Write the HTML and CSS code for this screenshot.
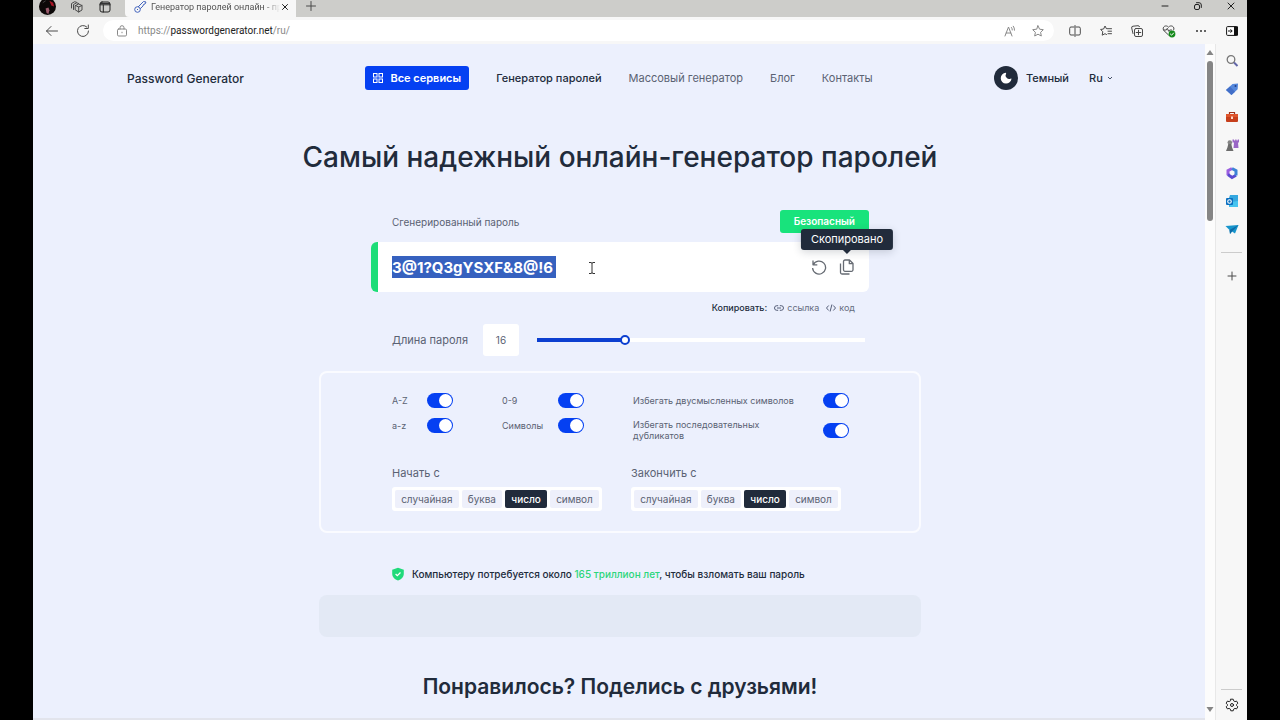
FILE: index.html
```html
<!DOCTYPE html>
<html lang="ru">
<head>
<meta charset="utf-8">
<title>Генератор паролей онлайн</title>
<link rel="stylesheet" href="styles.css">
</head>
<body>
<div class="window">
  <div class="tabs">
    <div class="tabs-left">
      <svg class="avatar" viewBox="0 0 18 18"><circle cx="9" cy="9" r="9" fill="#0c0808"/><path d="M11 3l4 2 1 4-3-1z" fill="#a81626"/><path d="M7 11l3-1 1 3-1 4-2-1z" fill="#9a5a6c"/><path d="M4 5l3-2" stroke="#444" fill="none"/></svg>
      <svg class="i14 line" viewBox="0 0 14 14"><path d="M5.500 5.500l3.200-1.500 3.300 1.500v4.500l-3.300 2-3.200-2zM5.500 5.500l3.200 1.500L12 5.500M8.700 7v5M3.500 9.500V4.500l3.200-1.700 2 .7M1.500 8V3.500L4.700 1.700l1.800.6"/></svg>
      <svg class="i14 line dark" viewBox="0 0 14 14"><rect x="2" y="2" width="10" height="10" rx="2"/><path d="M2 4.800h10M5.300 5v7M2.500 3.400h9"/></svg>
    </div>
    <div class="tab">
      <svg class="i14 key" viewBox="0 0 14 14"><circle cx="4.500" cy="9.500" r="2.800"/><path d="M5 7l5.500-5.500L13 2l-1 2-1.500.5L10 6 7.200 8.800M4 10l1-1"/></svg>
      <span class="tab-title">Генератор паролей онлайн - пр</span>
      <button class="bare" aria-label="Закрыть вкладку"><svg class="i10 line dark" viewBox="0 0 10 10"><path d="M2.500 2.500l5 5M7.500 2.500l-5 5"/></svg></button>
    </div>
    <button class="bare new-tab" aria-label="Новая вкладка"><svg class="i12 line" viewBox="0 0 12 12"><path d="M6 1.500v9M1.500 6h9"/></svg></button>
    <div class="win-buttons">
      <button class="bare" aria-label="Свернуть"><svg class="i12 line dark" viewBox="0 0 12 12"><path d="M3 6h6"/></svg></button>
      <button class="bare" aria-label="Восстановить"><svg class="i12 line dark" viewBox="0 0 12 12"><rect x="2.500" y="4.500" width="5" height="5" rx="1.500"/><path d="M4.500 2.700h2.500a2.300 2.300 0 0 1 2.300 2.300V7.500"/></svg></button>
      <button class="bare" aria-label="Закрыть"><svg class="i12 line dark" viewBox="0 0 12 12"><path d="M3 3l6 6M9 3l-6 6"/></svg></button>
    </div>
  </div>
  <div class="toolbar">
    <button class="bare" aria-label="Назад"><svg class="i14 line" viewBox="0 0 14 14"><path d="M12.500 7h-11M6 2.500L1.500 7 6 11.500"/></svg></button>
    <button class="bare" aria-label="Обновить"><svg class="i14 line" viewBox="0 0 14 14"><path d="M12.500 7a5.500 5.500 0 1 1-1.700-4M12.300 1v3.500H8.800"/></svg></button>
    <div class="address">
      <svg class="i12 line faint" viewBox="0 0 12 12"><rect x="1.500" y="4" width="9" height="7" rx="1.200"/><path d="M4 4V2.700a2 2 0 0 1 4 0V4M6 7.200v.6"/></svg>
      <a class="url" href="#">https://<b>passwordgenerator.net</b>/ru/</a>
      <svg class="i12 line faint" viewBox="0 0 12 12"><path d="M1 11L4.500 2 8 11M2.200 8h4.600M7.500 2.500a4 4 0 0 1 .8 2.500M9.300 1.200a6 6 0 0 1 1.200 4"/></svg>
      <svg class="i12 line faint" viewBox="0 0 12 12"><path d="M6 .8l1.600 3.400 3.700.5-2.700 2.600.7 3.700L6 9.200 2.700 11l.7-3.700L.7 4.700l3.700-.5z"/></svg>
    </div>
    <div class="tools">
      <svg class="i12 line" viewBox="0 0 12 12"><path d="M5 2H2a1.300 1.300 0 0 0-1.300 1.300v5.400A1.300 1.300 0 0 0 2 10h3M7 2h3a1.300 1.300 0 0 1 1.300 1.300v5.400A1.300 1.300 0 0 1 10 10H7M6 .5v11"/></svg>
      <svg class="i12 line" viewBox="0 0 12 12"><path d="M7 3.700h4.500M8 6.200h3.500M8 8.700h3.500M6.400 3.600L5 1 3.600 4 .6 4.500 2.800 6.700l-.6 3.500L5 8.700l1.500.8"/></svg>
      <svg class="i12 line" viewBox="0 0 12 12"><rect x="3.500" y="3.500" width="8" height="8" rx="1.500"/><path d="M7.500 5.200v4.600M5.200 7.500h4.600M2 8.500L.7 3A1.500 1.500 0 0 1 2 1.200L7 .7a1.500 1.500 0 0 1 1.500 1"/></svg>
      <svg class="i14 line" viewBox="0 0 14 14"><path d="M6.500 11L1.800 6.500C-.5 3 4 .2 6.500 3.200 9 .2 13.500 3 11.600 6M1.500 6h2.800l1-1.700 1.400 3 1-1.300h1.800"/><circle cx="10" cy="10" r="3.400" fill="#168a1c" stroke="none"/><path d="M8.400 10l1.200 1.200 2-2.200" stroke="#fff"/></svg>
      <svg class="i12" viewBox="0 0 12 12" fill="#333"><circle cx="2" cy="6" r="1"/><circle cx="6" cy="6" r="1"/><circle cx="10" cy="6" r="1"/></svg>
      <svg class="i12" viewBox="0 0 12 12"><rect x=".6" y="1.600" width="10.800" height="8.800" rx="1" fill="#fff" stroke="#111"/><path d="M8 1.500h4v9H8z" fill="#111"/><path d="M2 6h4M4.500 4.300L6.200 6 4.500 7.700" stroke="#111" fill="none"/></svg>
    </div>
  </div>
  <div class="body">
    <div class="page">
      <header class="header">
        <a class="logo" href="#">Password Generator</a>
        <nav class="nav">
          <button class="services"><svg class="i10" viewBox="0 0 10 10" fill="none" stroke="#fff"><rect x=".5" y=".5" width="3.500" height="3.500"/><rect x="6" y=".5" width="3.500" height="3.500"/><rect x=".5" y="6" width="3.500" height="3.500"/><rect x="6" y="6" width="3.500" height="3.500"/></svg>Все сервисы</button>
          <a class="current" href="#">Генератор паролей</a>
          <a href="#">Массовый генератор</a>
          <a href="#">Блог</a>
          <a href="#">Контакты</a>
        </nav>
        <div class="settings">
          <button class="theme"><svg class="i24" viewBox="0 0 24 24"><circle cx="12" cy="12" r="12" fill="#212b3b"/><path d="M11.800 6.800a5.400 5.400 0 1 0 5.700 6 .4.400 0 0 0-.6-.3 3.600 3.600 0 0 1-4.800-5 .5.500 0 0 0-.3-.7z" fill="#fff"/></svg>Темный</button>
          <label class="lang"><select aria-label="Язык"><option>Ru</option></select><svg class="i6" viewBox="0 0 6 6"><path d="M1 2l2 2 2-2" fill="none" stroke="#455066"/></svg></label>
        </div>
      </header>
      <main class="main">
        <h1>Самый надежный онлайн-генератор паролей</h1>
        <section class="generator">
          <div class="label-row"><label for="pw">Сгенерированный пароль</label><span class="badge">Безопасный</span></div>
          <div class="field">
            <input id="pw" class="password" type="text" readonly value="3@1?Q3gYSXF&amp;8@!6">
            <svg class="caret" viewBox="0 0 8 12"><path d="M1 .5h2l1 .7 1-.7h2M4 1v10M1 11.500h2l1-.7 1 .7h2" fill="none" stroke="#333"/></svg>
            <div class="actions">
              <button class="bare" aria-label="Обновить пароль"><svg class="i16 action" viewBox="0 0 16 16"><path d="M2 1.500v4.300h4.300M2.300 5.600A6.500 6.500 0 1 1 1.600 9"/></svg></button>
              <button class="bare copy" aria-label="Скопировать"><svg class="i16 action" viewBox="0 0 16 16"><path d="M10.500 1H6a1.500 1.500 0 0 0-1.500 1.500v8.300A1.500 1.500 0 0 0 6 12.300h6.500a1.500 1.500 0 0 0 1.500-1.500V4.500zM10.300 1v3.700H14M1.500 4.500v9A1.500 1.500 0 0 0 3 15h7.500"/></svg><span class="tooltip" role="tooltip">Скопировано</span></button>
            </div>
          </div>
          <div class="share"><b>Копировать:</b>
            <a href="#"><svg class="i10" viewBox="0 0 10 10"><path d="M4.200 7.300H2.800a2.300 2.300 0 0 1 0-4.600h1.400M5.800 2.700h1.400a2.300 2.300 0 0 1 0 4.600H5.800M3 5h4"/></svg>ссылка</a>
            <a href="#"><svg class="i10" viewBox="0 0 10 10"><path d="M2.700 2.500L.5 5l2.200 2.500M7.300 2.500L9.500 5 7.300 7.500M5.900 1.500l-1.800 7"/></svg>код</a></div>
          <div class="length"><label for="len">Длина пароля</label><input id="len" class="count" type="text" value="16"><input class="range" type="range" min="4" max="50" value="16" aria-label="Длина пароля"></div>
        </section>
        <section class="options">
          <div class="toggles">
            <div class="col"><label>A-Z<input type="checkbox" class="switch" checked></label><label>a-z<input type="checkbox" class="switch" checked></label></div>
            <div class="col col-b"><label>0-9<input type="checkbox" class="switch" checked></label><label>Символы<input type="checkbox" class="switch" checked></label></div>
            <div class="col col-c"><label>Избегать двусмысленных символов<input type="checkbox" class="switch" checked></label><label class="two">Избегать последовательных дубликатов<input type="checkbox" class="switch" checked></label></div>
          </div>
          <div class="ends">
            <fieldset><legend>Начать с</legend><div class="segments">
              <label><input type="radio" name="start">случайная</label><label><input type="radio" name="start">буква</label><label><input type="radio" name="start" checked>число</label><label><input type="radio" name="start">символ</label></div></fieldset>
            <fieldset><legend>Закончить с</legend><div class="segments">
              <label><input type="radio" name="end">случайная</label><label><input type="radio" name="end">буква</label><label><input type="radio" name="end" checked>число</label><label><input type="radio" name="end">символ</label></div></fieldset>
          </div>
        </section>
        <p class="strength"><svg class="i14" viewBox="0 0 14 14"><path d="M7 .7l5.800 2v4c0 3.300-2.500 5.600-5.800 6.800C3.700 12.300 1.200 10 1.200 6.700v-4z" fill="#20da7a"/><path d="M4.600 7l1.700 1.700 3.200-3.200" fill="none" stroke="#fff" stroke-width="1.200"/></svg><span>Компьютеру потребуется около <em>165 триллион лет</em>, чтобы взломать ваш пароль</span></p>
        <div class="banner"></div>
        <h2>Понравилось? Поделись с друзьями!</h2>
      </main>
    </div>
    <div class="scroll">
      <svg class="i8" viewBox="0 0 8 8"><path d="M4 1l3.500 5h-7z" fill="#858585"/></svg>
      <div class="thumb"></div>
      <svg class="i8 down" viewBox="0 0 8 8"><path d="M4 7L.5 2h7z" fill="#858585"/></svg>
    </div>
    <aside class="side">
      <svg class="i14" viewBox="0 0 14 14" fill="none"><circle cx="6" cy="5.500" r="3.800" stroke="#777" stroke-width="1.300"/><path d="M9 8.500l3.500 3.500" stroke="#6267a8" stroke-width="2"/></svg>
      <svg class="i14" viewBox="0 0 14 14"><path d="M1 8l6.500-6L13 1.500l-.3 5.800L6.500 13z" fill="#5588dc"/><path d="M1 8l4-3.500 5 5.200L6.500 13z" fill="#426fc8"/><circle cx="10.500" cy="4" r="1" fill="#243f87"/></svg>
      <svg class="i14" viewBox="0 0 14 14"><path d="M4.500 4V2.500h5V4" fill="none" stroke="#9b321d" stroke-width="1.200"/><rect x="1" y="4" width="12" height="8" rx="1" fill="#c63f1c"/><path d="M1 4h12v3H1z" fill="#df552c"/><path d="M6 6.500h2v2.500H6z" fill="#ffd8c9"/></svg>
      <svg class="i14" viewBox="0 0 14 14"><path d="M7.500 1.500H9v1h1.200v-1h1.300v1h1.200v-1H14v3h-1l.5 5.500h-5L9 4.500H7.500z" fill="#9a66c6"/><circle cx="4.800" cy="4.500" r="2.300" fill="#858585"/><path d="M3.300 6h3l.8 3.500 1.400 3.500H1l1.400-3.500z" fill="#6c6c6c"/></svg>
      <svg class="i14" viewBox="0 0 14 14" fill="none" stroke-width="3"><path d="M7 2.500L3 4.700v4.500" stroke="#9b5ee0"/><path d="M3 8.500l4 3 4-2.300" stroke="#5a4ad0"/><path d="M11 9.500V4.700L7 2.500" stroke="#3c83d6"/><path d="M7 5l2 1v2L7 9 5 8V6z" fill="#f7f7f7" stroke="none"/></svg>
      <svg class="i14" viewBox="0 0 14 14"><path d="M5 1h8v12H4V4z" fill="#35a8e0"/><path d="M6 8l7-1v6H4z" fill="#46c4f0"/><rect x="1" y="4" width="7" height="7" rx="1" fill="#0a6fc0"/><circle cx="4.500" cy="7.500" r="1.800" fill="none" stroke="#fff" stroke-width="1.100"/></svg>
      <svg class="i14" viewBox="0 0 14 14"><path d="M.5 4L13.500 3l-3.500 8.500-3-2-2 2.500-.5-4z" fill="#1795cc"/><path d="M4.500 8l9-5L7 9.500 5 12z" fill="#0e6ba7"/></svg>
      <hr>
      <button class="bare" aria-label="Добавить"><svg class="i14 line" viewBox="0 0 14 14"><path d="M7 3v8M3 7h8"/></svg></button>
      <hr class="low">
      <button class="bare gear" aria-label="Настройки"><svg class="i14 line dark" viewBox="0 0 14 14"><path d="M5.800 1.200h2.400l.5 1.700 1.200.7 1.700-.5 1.200 2.100L11.600 6.500v1.100l1.200 1.200-1.200 2.100-1.700-.5-1.200.7-.5 1.700H5.800l-.5-1.700-1.200-.7-1.700.5-1.200-2.100 1.200-1.200V6.500L1.200 5.200l1.200-2.100 1.700.5 1.200-.7z"/><circle cx="7" cy="7" r="1.500"/></svg></button>
    </aside>
  </div>
</div>
</body>
</html>
```
FILE: styles.css
```css
* { box-sizing: border-box; }
body { margin: 0; padding: 0 33px; background: #000; font-family: Inter, "Noto Sans", sans-serif; color: #212b3b; }
.window { height: 100vh; display: flex; flex-direction: column; overflow: hidden; background: #f7f7f7; }
svg { display: block; flex: none; }
a { color: inherit; text-decoration: none; }
button, input, select { font: inherit; color: inherit; }
.bare { border: 0; background: none; padding: 0; }
.i6 { width: 6px; height: 6px; }
.i8 { width: 8px; height: 8px; }
.i10 { width: 10px; height: 10px; }
.i12 { width: 12px; height: 12px; }
.i14 { width: 14px; height: 14px; }
.i16 { width: 16px; height: 16px; }
.i24 { width: 24px; height: 24px; }
.line { fill: none; stroke: #4a4a4a; stroke-linecap: round; stroke-linejoin: round; }
.dark { stroke: #222; }
.faint { stroke: #888; }

/* Browser chrome */
.tabs { height: 17px; flex: none; display: flex; align-items: center; background: #cdcdca; font-family: Roboto, sans-serif; }
.tabs-left { display: flex; align-items: center; gap: 14px; width: 92px; padding-left: 6px; height: 12px; padding-bottom: 4px; }
.avatar { width: 17px; height: 17px; }
.tab { align-self: stretch; display: flex; align-items: center; width: 171px; padding: 0 6px 4px 8px; background: #f7f7f7; border-radius: 0 0 0 4px; }
.tab-title { flex: 1; margin: 0 0 0 4px; overflow: hidden; white-space: nowrap; font-size: 9px; line-height: 12px; color: #555; mask-image: linear-gradient(90deg, #000 88%, transparent); }
.key { fill: none; stroke: #4263bd; }
.new-tab { margin: 0 0 5px 9px; }
.win-buttons { margin-left: auto; padding: 0 10px 5px 0; display: flex; gap: 21px; }
.toolbar { height: 27px; flex: none; display: flex; align-items: center; padding: 0 9px 0 12px; gap: 17px; }
.address { flex: 1; height: 21px; display: flex; align-items: center; gap: 16px; margin-left: -4px; padding: 0 10px 0 13px; border-radius: 11px; background: #fff; font: 10px Roboto, sans-serif; color: #888; }
.address .url { flex: 1; margin-left: -6px; }
.address b { font-weight: 400; color: #222; }
.tools { display: flex; align-items: center; gap: 19px; margin-left: -2px; }
.body { flex: 1; min-height: 0; display: flex; }

/* Page */
.page { flex: 1; min-width: 0; overflow: hidden; padding: 0 92px 0 94px; background: #ecf0fd; border-bottom: 2px solid #e2e4ec; }
.header { display: flex; justify-content: space-between; align-items: center; height: 68px; font-size: 12px; }
.logo { font-size: 12px; font-weight: 500; }
.nav { display: flex; align-items: center; gap: 27px; font-size: 11px; color: #5a6273; white-space: nowrap; }
.nav .current { color: #212b3b; font-weight: 500; }
.services { display: flex; align-items: center; gap: 7px; height: 24px; padding: 0 8px; border: 0; border-radius: 3px; background: #0540f2; color: #fff; font-size: 11px; font-weight: 600; }
.settings { display: flex; align-items: center; gap: 20px; font-size: 11px; font-weight: 500; }
.theme { display: flex; align-items: center; gap: 8px; padding: 0; border: 0; background: none; }
.lang { display: flex; align-items: center; gap: 4px; }
.lang select { appearance: none; border: 0; padding: 0; background: none; }
.main { display: flex; flex-direction: column; align-items: center; }
h1 { margin: 28px 0 35px; font-size: 28px; line-height: 35px; font-weight: 500; white-space: nowrap; }
.generator { width: 100%; max-width: 498px; }
.label-row { display: flex; justify-content: space-between; align-items: center; padding-left: 21px; font-size: 10px; color: #5a6273; }
.badge { padding: 0 14px; border-radius: 3px; background: #18e37c; color: #fff; font-size: 10px; line-height: 23px; font-weight: 600; }
.field { position: relative; display: flex; align-items: center; justify-content: space-between; height: 50px; margin-top: 9px; padding: 0 14px; border-left: 7px solid #1ddd78; border-radius: 6px; background: #fff; }
.password { width: 164px; height: 22px; padding: 0; border: 0; background: #3661bf; color: #fff; font-size: 15px; font-weight: 700; }
.caret { position: absolute; left: 210px; top: 20px; width: 8px; height: 12px; }
.actions { display: flex; gap: 12px; }
.action { fill: none; stroke: #666b73; stroke-width: 1.3; stroke-linejoin: round; }
.copy { position: relative; }
.tooltip { position: absolute; bottom: 25px; left: 50%; transform: translateX(-50%); padding: 0 10px; border-radius: 3px; background: #212b3b; box-shadow: 0 2px 8px #212b3b33; color: #fff; font-size: 11px; line-height: 21px; }
.tooltip::after { content: ""; position: absolute; top: 100%; left: 50%; margin-left: -4px; border: 4px solid transparent; border-top-color: #212b3b; border-bottom: 0; }
.share { display: flex; justify-content: flex-end; align-items: center; gap: 7px; padding: 9px 14px 0 0; font-size: 9px; line-height: 14px; color: #666d80; }
.share b { color: #212b3b; font-weight: 500; }
.share a { display: flex; align-items: center; gap: 3px; }
.share svg { fill: none; stroke: #555e78; }
.length { display: flex; align-items: center; margin-top: 9px; padding: 0 4px 0 21px; font-size: 11px; color: #5a6273; }
.length label { width: 91px; white-space: nowrap; }
.count { width: 36px; height: 32px; margin-right: 18px; padding: 0; border: 0; border-radius: 3px; background: #fff; text-align: center; font-size: 10px; }
.range { flex: 1; min-width: 0; height: 10px; margin: 0; appearance: none; border-radius: 2px; background: linear-gradient(90deg, #0c3fd0 27%, #fff 27%) center / 100% 4px no-repeat; }
.range::-webkit-slider-thumb { appearance: none; width: 10px; height: 10px; border: 2px solid #0c3fd0; border-radius: 50%; background: #fff; }
.options { width: 100%; max-width: 602px; margin-top: 15px; padding: 19px 70px 20px 71px; border: 2px solid #fafbff; border-radius: 8px; color: #5a6273; }
.toggles { display: flex; min-height: 53px; font-size: 9px; line-height: 11px; }
.col { display: flex; flex-direction: column; gap: 8px; width: 61px; }
.col label { display: flex; justify-content: space-between; align-items: center; min-height: 17px; }
.col-b { width: 82px; margin-left: 49px; }
.col-c { width: 216px; margin-left: 49px; white-space: nowrap; gap: 9px; }
.col .two { white-space: normal; min-height: 24px; }
.two .switch { margin-left: 50px; }
.switch { appearance: none; flex: none; width: 26px; height: 15px; margin: 0; padding: 1px; display: flex; justify-content: flex-end; border-radius: 8px; background: #0540f2; }
.switch::before { content: ""; width: 13px; height: 13px; border-radius: 50%; background: #fff; }
.ends { display: flex; gap: 29px; margin-top: 21px; }
fieldset { margin: 0; padding: 0; border: 0; min-width: 0; }
legend { padding: 0; font-size: 11px; line-height: 15px; }
.segments { display: flex; gap: 3px; width: 210px; height: 24px; margin-top: 6px; padding: 3px; border-radius: 3px; background: #fff; }
.segments label { flex: 1 1 auto; text-align: center; border-radius: 2px; background: #eef0fb; font-size: 10px; line-height: 18px; white-space: nowrap; }
.segments label:has(:checked) { background: #212b3b; color: #fff; font-weight: 500; }
.segments input { position: absolute; appearance: none; margin: 0; }
.strength { display: flex; align-items: center; gap: 7px; width: 100%; max-width: 458px; margin: 33px 0 0; font-size: 10px; line-height: 16px; font-weight: 500; white-space: nowrap; }
.strength em { font-style: normal; color: #2bd67b; }
.banner { width: 100%; max-width: 602px; height: 42px; margin-top: 13px; border-radius: 8px; background: #e3e9f5; }
h2 { margin: 35px 0 0; font-size: 21px; line-height: 30px; font-weight: 600; white-space: nowrap; }

/* Scroll bar and sidebar */
.scroll { width: 11px; display: flex; flex-direction: column; align-items: center; padding: 5px 0 7px; background: #fcfcfc; border-right: 1px solid #e8e8e8; }
.thumb { width: 6px; height: 160px; margin-top: 4px; border-radius: 3px; background: #858585; }
.down { margin-top: auto; }
.side { width: 31px; display: flex; flex-direction: column; align-items: center; gap: 14px; padding: 10px 0 8px; }
.side hr { width: 21px; margin: 2px 0; border: 0; border-top: 1px solid #ccc; }
.side .low { margin-top: auto; margin-bottom: -6px; }
```
